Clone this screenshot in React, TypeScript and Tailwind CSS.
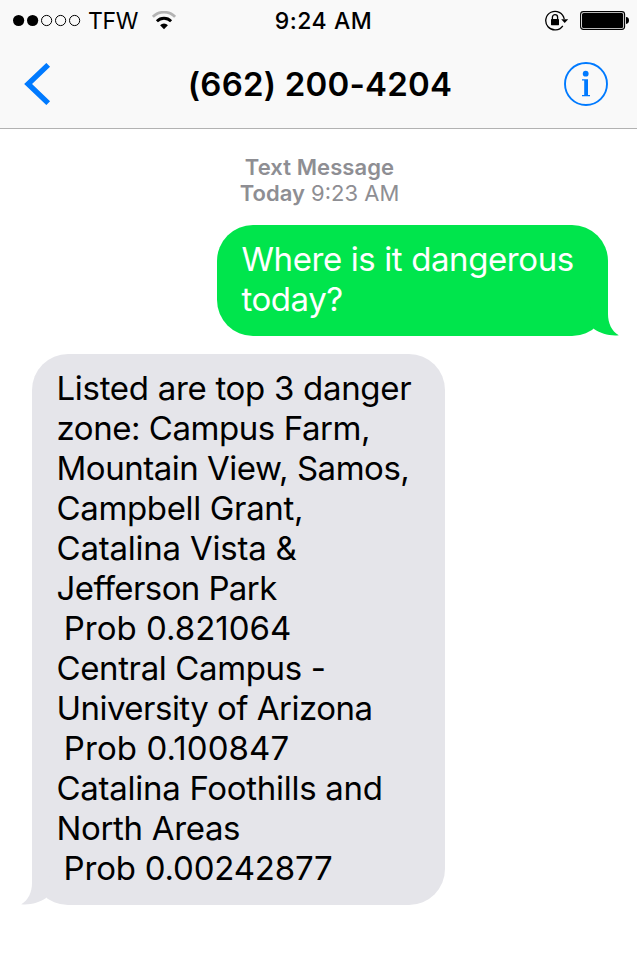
import clsx from "clsx";

const reply = [
  { text: "Listed are top 3 danger", tracking: "tracking-[-0.3px]" },
  { text: "zone: Campus Farm,", tracking: "tracking-[-0.45px]" },
  { text: "Mountain View, Samos,", tracking: "tracking-[-0.48px]" },
  { text: "Campbell Grant,", tracking: "tracking-[-0.35px]" },
  { text: "Catalina Vista &", tracking: "tracking-[-0.22px]" },
  { text: "Jefferson Park", tracking: "tracking-[-0.6px]" },
  { text: " Prob 0.821064", tracking: "-indent-[2px]" },
  { text: "Central Campus -", tracking: "tracking-[-0.38px]" },
  { text: "University of Arizona", tracking: "tracking-[-0.52px]" },
  { text: " Prob 0.100847", tracking: "-indent-[2px] tracking-[0.08px]" },
  { text: "Catalina Foothills and", tracking: "tracking-[-0.28px]" },
  { text: "North Areas", tracking: "tracking-[-0.33px]" },
  { text: " Prob 0.00242877", tracking: "-indent-[2px] tracking-[-0.2px]" },
];

const question = [
  { text: "Where is it dangerous", tracking: "tracking-[-0.4px]" },
  { text: "today?", tracking: "tracking-[-0.45px]" },
];

const SignalDots = () => (
  <svg width="68" height="13" viewBox="0 0 68 13" className="shrink-0">
    <circle cx="5.6" cy="6.5" r="5.6" />
    <circle cx="19.6" cy="6.5" r="5.6" />
    {[33.6, 47.6, 61.6].map((cx) => (
      <circle key={cx} cx={cx} cy="6.5" r="5.1" fill="none" stroke="#000" strokeWidth="1" />
    ))}
  </svg>
);

const WifiIcon = () => (
  <svg width="24" height="19" viewBox="0 0 24 19" className="shrink-0">
    <path d="M0.9 5.8A15.6 15.6 0 0 1 23.1 5.8" fill="none" stroke="#b4b4b4" strokeWidth="2.7" />
    <path d="M4.9 10.2A10 10 0 0 1 19.1 10.2" fill="none" stroke="#000" strokeWidth="2.8" />
    <path d="M8.1 14.2A5.5 5.5 0 0 1 15.9 14.2L12 18.2Z" />
  </svg>
);

const LockIcon = () => (
  <svg width="24" height="21" viewBox="0 0 24 21" className="shrink-0">
    <path d="M17.8 15.8A9.3 9.3 0 1 1 19.2 9" fill="none" stroke="#000" strokeWidth="1.3" />
    <path d="M16.2 9.2H23.2L19.7 12.9Z" />
    <rect x="6" y="8.9" width="8" height="6.3" rx="0.6" />
    <path d="M7.4 9.5V7.2A2.6 2.6 0 0 1 12.6 7.2V9.5" fill="none" stroke="#000" strokeWidth="1.3" />
  </svg>
);

const BatteryIcon = () => (
  <svg width="50" height="19" viewBox="0 0 50 19" className="shrink-0">
    <rect x="0.6" y="0.6" width="44" height="17.8" rx="2.8" fill="none" stroke="#000" strokeWidth="1.1" />
    <rect x="2" y="2" width="41.2" height="15" rx="1.6" />
    <path d="M46 6.1C48.2 6.3 49 7.5 49 9.5S48.2 12.7 46 12.9Z" />
  </svg>
);

const Tail = ({ className }: { className: string }) => (
  <svg width="30" height="36" viewBox="0 0 30 36" className={clsx("absolute bottom-0", className)}>
    <path d="M0 0H19V14C19 23 22.5 31 29.8 35.3C20.5 36.2 12 33.6 5 29Z" fill="currentColor" />
  </svg>
);

const Lines = ({ items }: { items: { text: string; tracking: string }[] }) => (
  <>
    {items.map((line) => (
      <p key={line.text} className={clsx("whitespace-pre", line.tracking)}>{line.text}</p>
    ))}
  </>
);

export default function App() {
  return (
    <div className="h-[956px] w-full overflow-hidden bg-white font-['Inter',sans-serif] text-black">
      <header className="h-[129px] border-b border-[#b2b2b2] bg-[#f9f9f9]">
        <div className="grid h-10 grid-cols-[1fr_auto_1fr] items-center pl-[13px] pr-[7px] pt-px">
          <div className="flex items-center">
            <SignalDots />
            <span className="ml-[7px] pt-0.5 text-[23px] leading-[37px] tracking-[-0.3px]">TFW</span>
            <div className="ml-[14px]"><WifiIcon /></div>
          </div>
          <span className="pl-[4px] pt-0.5 text-[23px] font-medium leading-[37px] tracking-[0.55px]">9:24 AM</span>
          <div className="flex items-center justify-end gap-[11px]">
            <LockIcon />
            <BatteryIcon />
          </div>
        </div>
        <div className="grid h-[88px] grid-cols-[1fr_auto_1fr] items-center pl-6 pr-7">
          <button>
            <svg width="28" height="42" viewBox="0 0 28 42">
              <path d="M24.2 1.9L4.1 21L24.2 40.1" fill="none" stroke="#007aff" strokeWidth="5.4" />
            </svg>
          </button>
          <h1 className="pl-[7px] text-[33px] font-semibold leading-[40px] tracking-[0.2px]">(662) 200-4204</h1>
          <button className="justify-self-end">
            <svg width="46" height="46" viewBox="0 0 46 46" fill="#007aff">
              <circle cx="23" cy="23" r="21" fill="none" stroke="#007aff" strokeWidth="1.9" />
              <circle cx="22.7" cy="12.7" r="2.9" />
              <path d="M19 18.2H25V34H27V35.3H19V34H21.2V19.6H19Z" />
            </svg>
          </button>
        </div>
      </header>

      <main className="flex flex-col">
        <div className="mt-[25px] pl-[2px] text-center text-[22px] leading-[26px] text-[#8e8e93]">
          <p className="font-semibold tracking-[0.08px]">Text Message</p>
          <p><span className="font-semibold">Today</span> 9:23 AM</p>
        </div>

        <div className="relative mr-[29px] mt-[19px] h-[111px] w-[391px] self-end rounded-[36px] bg-[#00e54c] pl-[24.5px] pt-[14px] text-[33px] leading-[40px] text-white">
          <Tail className="-right-[11px] text-[#00e54c]" />
          <Lines items={question} />
        </div>

        <div className="relative ml-8 mt-[18px] h-[551px] w-[413px] rounded-[36px] bg-[#e5e5ea] pl-[24.5px] pt-[14px] text-[33px] leading-[40px]">
          <Tail className="-left-[11px] -scale-x-100 text-[#e5e5ea]" />
          <Lines items={reply} />
        </div>
      </main>
    </div>
  );
}
